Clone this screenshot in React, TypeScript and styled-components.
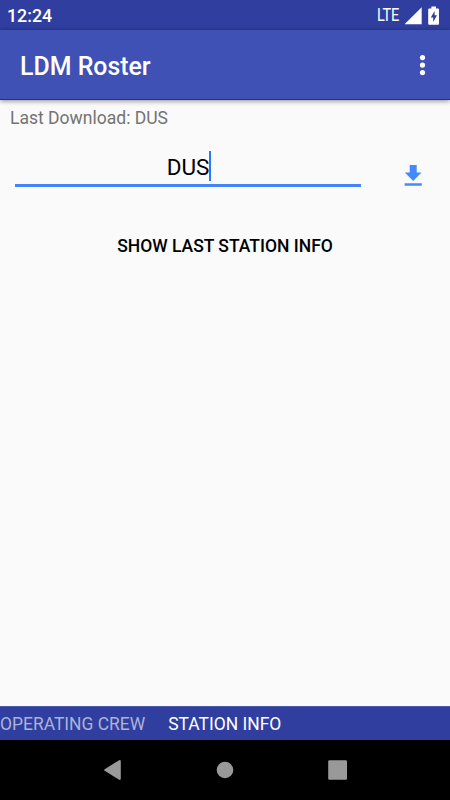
import React from "react";
import styled, { createGlobalStyle } from "styled-components";

const GlobalStyle = createGlobalStyle`
  * { box-sizing: border-box; }
  body { margin: 0; background: #fafafa; font-family: Roboto, sans-serif; }
  svg { display: block; }
`;

const Screen = styled.div`
  width: 450px;
  height: 800px;
  display: flex;
  flex-direction: column;
  overflow: hidden;
  background: #fafafa;
`;

const StatusBar = styled.header`
  flex: none;
  height: 30px;
  padding: 1px 10px 0 7px;
  display: flex;
  align-items: center;
  justify-content: space-between;
  background: #303f9f;
  color: #fff;
`;

const Clock = styled.span`
  font-size: 17.8px;
  font-weight: 500;
  line-height: 30px;
`;

const StatusIcons = styled.div`
  display: flex;
  align-items: center;
`;

const Network = styled.span`
  width: 28px;
  font-size: 17.5px;
  line-height: 29px;
  letter-spacing: -0.4px;
  white-space: nowrap;
  transform: scaleX(0.83);
  transform-origin: left center;
`;

const AppBar = styled.div`
  flex: none;
  height: 70px;
  padding: 2px 19px 0 20px;
  display: flex;
  align-items: center;
  justify-content: space-between;
  background: #3f51b5;
  color: #fff;
  border-bottom: 1px solid #1a309c;
  box-shadow: 0 1px 5px rgba(0, 0, 0, 0.45);
`;

const Title = styled.h1`
  margin: 0;
  padding-top: 2px;
  font-size: 24.9px;
  font-weight: 500;
  line-height: 32px;
`;

const MenuButton = styled.button`
  padding: 0;
  border: 0;
  background: none;
`;

const Content = styled.main`
  flex: 1;
  display: flex;
  flex-direction: column;
`;

const LastDownload = styled.p`
  margin: 6px 0 0 10px;
  font-size: 17.55px;
  line-height: 24px;
  color: #737373;
`;

const StationRow = styled.div`
  display: flex;
  justify-content: space-between;
  margin: 20px 28px 0 15px;
`;

const StationField = styled.div`
  width: 346px;
  height: 37px;
  padding: 1px 0 0 2px;
  display: flex;
  justify-content: center;
  border-bottom: 3px solid #4285f8;
`;

const StationCode = styled.span`
  font-size: 22.5px;
  line-height: 33px;
  color: #000;
`;

const Caret = styled.span`
  width: 2px;
  height: 30px;
  background: #2979ff;
`;

const DownloadButton = styled.button`
  padding: 14px 0 0;
  border: 0;
  background: none;
`;

const ShowButton = styled.button`
  align-self: center;
  margin-top: 46px;
  padding: 0;
  border: 0;
  background: none;
  font-family: inherit;
  font-size: 17.5px;
  font-weight: 500;
  line-height: 26px;
  color: #000;
`;

const Tabs = styled.nav`
  flex: none;
  height: 34px;
  display: flex;
  gap: 23px;
  background: #303f9f;
  border-top: 1px solid #4c5aad;
`;

const Tab = styled.span<{ $active?: boolean }>`
  font-size: 17.45px;
  line-height: 35px;
  white-space: nowrap;
  color: ${(p) => (p.$active ? "#fff" : "#acb2d9")};
`;

const NavigationBar = styled.footer`
  flex: none;
  height: 60px;
  display: flex;
  justify-content: center;
  align-items: center;
  gap: 88.5px;
  background: #000;
`;

export default function App() {
  return (
    <Screen>
      <GlobalStyle />
      <StatusBar>
        <Clock>12:24</Clock>
        <StatusIcons>
          <Network>LTE</Network>
          <svg width="35" height="20" viewBox="0 0 35 20" fill="#fff">
            <path d="M-.5 18.3 16.7 1.3v17z" />
            <path d="M26.4.5h4.6v2h2q1 0 1 1v14q0 1.2-1 1.2h-8.8q-1 0-1-1.2v-14q0-1 1-1h2.2z" />
            <path d="M29.6 5 25.8 11.5h2.4V16l3.8-6.8h-2.4z" fill="#303f9f" />
          </svg>
        </StatusIcons>
      </StatusBar>
      <AppBar>
        <Title>LDM Roster</Title>
        <MenuButton aria-label="More options">
          <svg width="17" height="24" fill="#fff">
            <circle cx="8.5" cy="3.6" r="2.6" />
            <circle cx="8.5" cy="11.1" r="2.6" />
            <circle cx="8.5" cy="18.6" r="2.6" />
          </svg>
        </MenuButton>
      </AppBar>
      <Content>
        <LastDownload>Last Download: DUS</LastDownload>
        <StationRow>
          <StationField>
            <StationCode>DUS</StationCode>
            <Caret />
          </StationField>
          <DownloadButton aria-label="Download">
            <svg width="18" height="22" viewBox="0 0 18 22" fill="#448aff">
              <path d="M5.7 0h7v7.6h4.8L9.2 16 .8 7.6h4.9zM.6 18.3h17.2v2.5H.6z" />
            </svg>
          </DownloadButton>
        </StationRow>
        <ShowButton>SHOW LAST STATION INFO</ShowButton>
      </Content>
      <Tabs>
        <Tab>OPERATING CREW</Tab>
        <Tab $active>STATION INFO</Tab>
      </Tabs>
      <NavigationBar>
        <svg width="24" height="24" fill="#999">
          <path d="M3.7 11.2 17.7 2.4Q19.8 1.4 19.8 3.4v17.2q0 2-2.1 1L3.7 12.8q-1.4-.8 0-1.6z" />
        </svg>
        <svg width="24" height="24" fill="#999">
          <circle cx="12" cy="12" r="8.3" />
        </svg>
        <svg width="24" height="24" fill="#999">
          <rect x="2.2" y="2.3" width="18.8" height="19.4" rx="1.2" />
        </svg>
      </NavigationBar>
    </Screen>
  );
}
